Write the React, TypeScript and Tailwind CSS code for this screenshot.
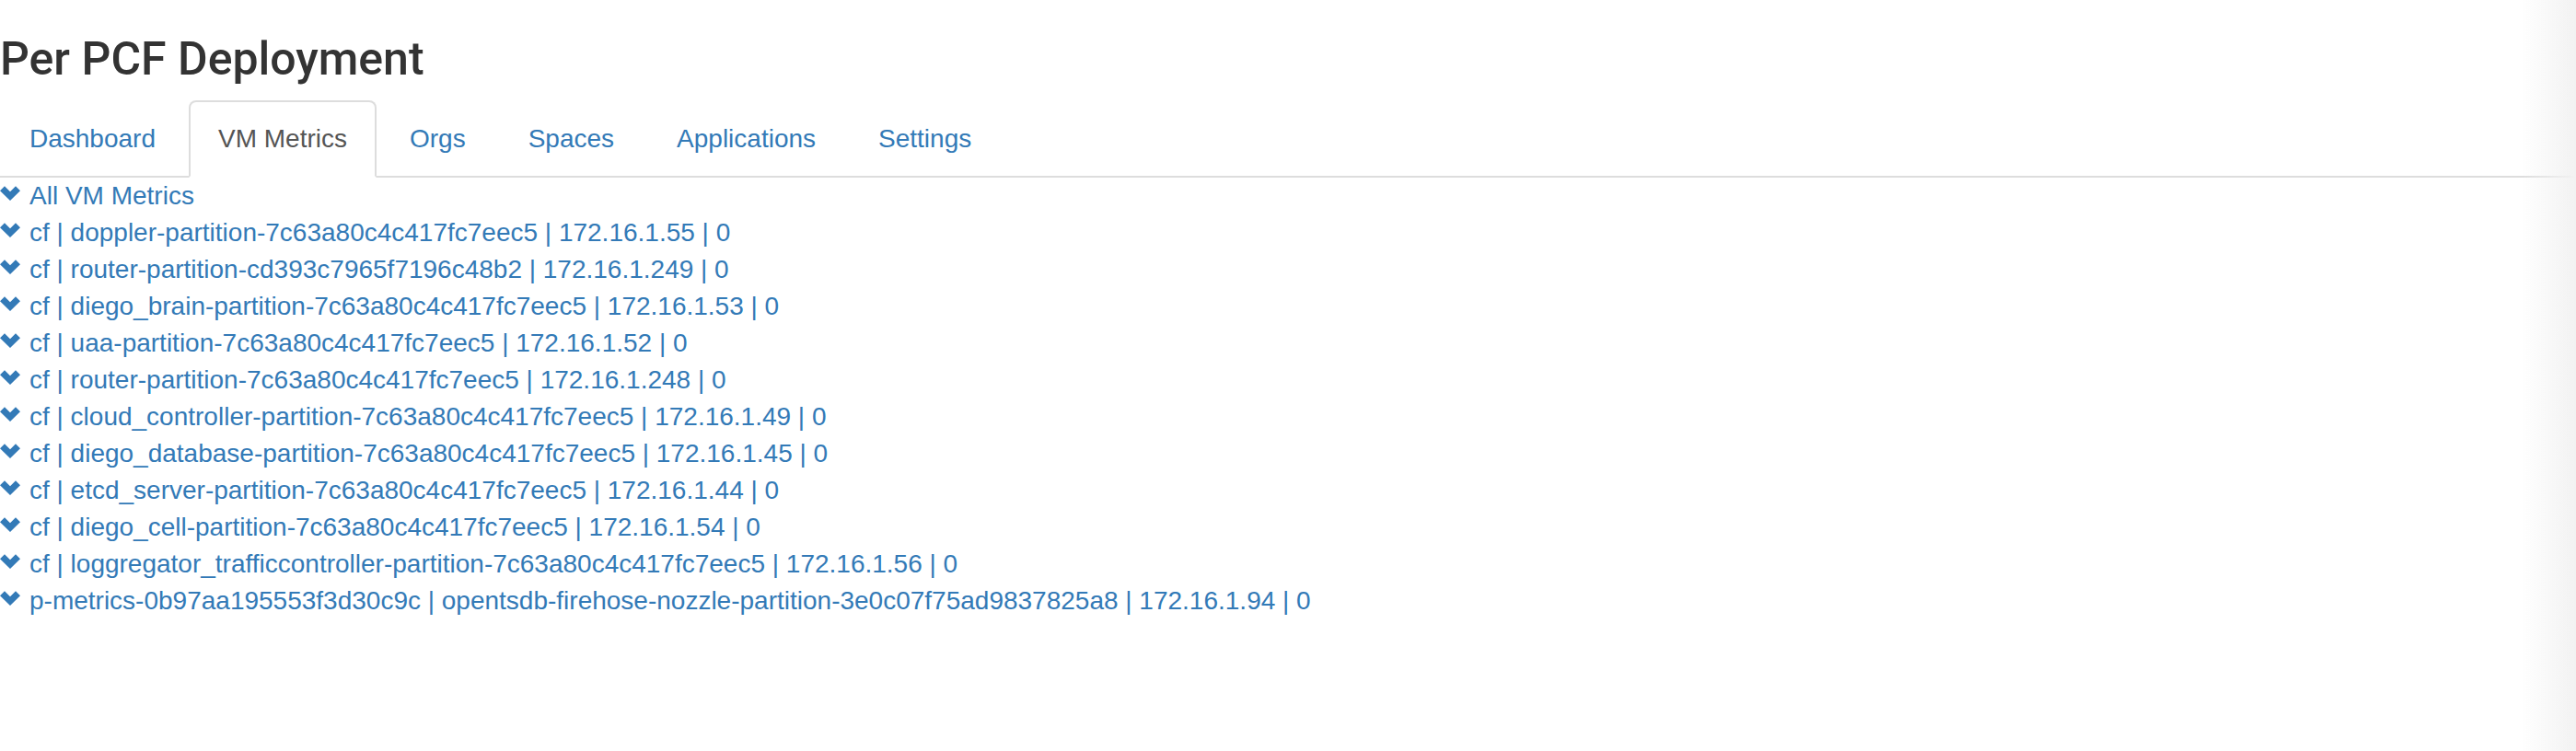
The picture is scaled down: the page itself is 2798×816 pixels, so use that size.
import React from 'react'

const TABS = ['Dashboard', 'VM Metrics', 'Orgs', 'Spaces', 'Applications', 'Settings']
const ACTIVE_TAB = 'VM Metrics'

const VMS = [
  'All VM Metrics',
  'cf | doppler-partition-7c63a80c4c417fc7eec5 | 172.16.1.55 | 0',
  'cf | router-partition-cd393c7965f7196c48b2 | 172.16.1.249 | 0',
  'cf | diego_brain-partition-7c63a80c4c417fc7eec5 | 172.16.1.53 | 0',
  'cf | uaa-partition-7c63a80c4c417fc7eec5 | 172.16.1.52 | 0',
  'cf | router-partition-7c63a80c4c417fc7eec5 | 172.16.1.248 | 0',
  'cf | cloud_controller-partition-7c63a80c4c417fc7eec5 | 172.16.1.49 | 0',
  'cf | diego_database-partition-7c63a80c4c417fc7eec5 | 172.16.1.45 | 0',
  'cf | etcd_server-partition-7c63a80c4c417fc7eec5 | 172.16.1.44 | 0',
  'cf | diego_cell-partition-7c63a80c4c417fc7eec5 | 172.16.1.54 | 0',
  'cf | loggregator_trafficcontroller-partition-7c63a80c4c417fc7eec5 | 172.16.1.56 | 0',
  'p-metrics-0b97aa195553f3d30c9c | opentsdb-firehose-nozzle-partition-3e0c07f75ad9837825a8 | 172.16.1.94 | 0',
]

function ChevronDown() {
  return (
    <svg width="22" height="16" viewBox="0 0 22 16" className="shrink-0 mb-[5px]">
      <path d="M0 5.2 L5 0.2 L11 6.2 L17 0.2 L22 5.2 L11 16 Z" fill="#337ab7" />
    </svg>
  )
}

function Tabs() {
  return (
    <ul className="flex border-b-2 border-[#dddddd]">
      {TABS.map((tab) => {
        const active = tab === ACTIVE_TAB
        return (
          <li key={tab} className="-mb-[2px] mr-[4px]">
            <a
              href="#"
              className={`block px-[30px] py-[20px] leading-[40px] border-2 rounded-t-[8px] ${
                active
                  ? 'border-[#dddddd] border-b-transparent bg-white text-[#555555]'
                  : 'border-transparent text-[#337ab7]'
              }`}
            >
              {tab}
            </a>
          </li>
        )
      })}
    </ul>
  )
}

export default function App() {
  return (
    <div
      className="relative min-h-screen bg-white text-[28px] leading-[40px] text-[#333333]"
      style={{ fontFamily: '"Liberation Sans", Arial, sans-serif' }}
    >
      <h3
        className="mt-[38px] mb-[18px] text-[50px] leading-[52.8px] font-medium text-[#333333]"
        style={{ fontFamily: 'Roboto, "Liberation Sans", sans-serif' }}
      >
        Per PCF Deployment
      </h3>

      <Tabs />

      <div className="flex flex-col">
        {VMS.map((vm) => (
          <a key={vm} href="#" className="flex items-center gap-[10px] h-[40px] text-[#337ab7] whitespace-nowrap">
            <ChevronDown />
            <span>{vm}</span>
          </a>
        ))}
      </div>

      {/* right edge shade */}
      <div className="pointer-events-none fixed right-0 top-0 h-screen w-[60px] bg-linear-to-r from-transparent to-[#f2f2f2]" />
    </div>
  )
}
